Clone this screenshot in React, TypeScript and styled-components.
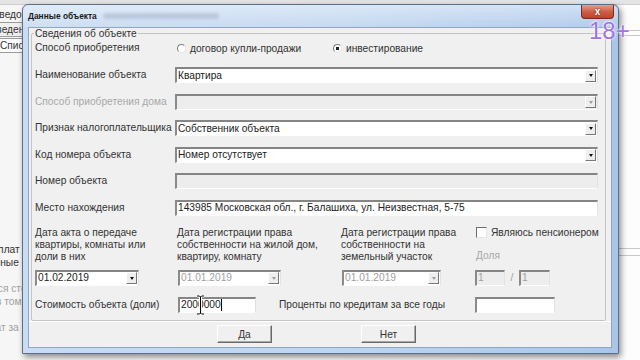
import styled, { createGlobalStyle } from 'styled-components';

const FS = '10.2px';

const GlobalStyle = createGlobalStyle`
    html, body {
        margin: 0;
        padding: 0;
        width: 640px;
        height: 360px;
        overflow: hidden;
        background: #f6f6f6;
        font-family: 'Liberation Sans', Arial, sans-serif;
    }
`;

export default function App() {
    return (
        <>
            <GlobalStyle />
            <Desktop>
                <TopBand />
                <BackPane>
                    <BackText style={{ marginTop: 8 }} $shift={-8}>Сведо</BackText>
                    <BackField $shift={-12}>Сведения</BackField>
                    <BackField $shift={-1} $white>Список</BackField>
                    <BackText style={{ marginTop: 190 }} $shift={-16}>Выплат имущ</BackText>
                    <BackText $shift={-18}>Данные о</BackText>
                    <BackText style={{ marginTop: 13 }} $shift={-9} $muted>Вся сто</BackText>
                    <BackText $shift={-4} $muted>в том</BackText>
                    <BackText style={{ marginTop: 13 }} $shift={-22} $muted>Уплат за</BackText>
                </BackPane>
                <RightPane>
                    <RightLine style={{ marginTop: 30 }} />
                    <RightLine style={{ marginTop: 4 }} />
                    <RightLine style={{ marginTop: 212 }} />
                    <RightLine style={{ marginTop: 6 }} />
                </RightPane>
            </Desktop>

            <Window>
                <TitleBar>
                    <Title>Данные объекта</Title>
                    <Blurred />
                    <CloseButton>x</CloseButton>
                </TitleBar>

                <Client>
                    <Group>
                        <Legend>Сведения об объекте</Legend>

                        <Row>
                            <Label>Способ приобретения</Label>
                            <RadioOption style={{ width: 154 }}>
                                <Radio />
                                договор купли-продажи
                            </RadioOption>
                            <RadioOption>
                                <Radio $checked />
                                инвестирование
                            </RadioOption>
                        </Row>

                        <Rows>
                            <Row>
                                <Label>Наименование объекта</Label>
                                <Combo value="Квартира" />
                            </Row>
                            <Row>
                                <Label $disabled>Способ приобретения дома</Label>
                                <Combo disabled />
                            </Row>
                            <Row>
                                <Label>Признак налогоплательщика</Label>
                                <Combo value="Собственник объекта" />
                            </Row>
                            <Row>
                                <Label>Код номера объекта</Label>
                                <Combo value="Номер отсутствует" />
                            </Row>
                            <Row>
                                <Label>Номер объекта</Label>
                                <TextBox $disabled $width={423} />
                            </Row>
                            <Row>
                                <Label>Место нахождения</Label>
                                <TextBox $width={423}>
                                    143985 Московская обл., г. Балашиха, ул. Неизвестная, 5-75
                                </TextBox>
                            </Row>
                        </Rows>

                        <DatesGrid>
                            <Caption>
                                Дата акта о передаче
                                <br />
                                квартиры, комнаты или
                                <br />
                                доли в них
                            </Caption>
                            <Caption>
                                Дата регистрации права
                                <br />
                                собственности на жилой дом,
                                <br />
                                квартиру, комнату
                            </Caption>
                            <Caption>
                                Дата регистрации права
                                <br />
                                собственности на
                                <br />
                                земельный участок
                            </Caption>
                            <PensionCol>
                                <CheckOption>
                                    <Check />
                                    Являюсь пенсионером
                                </CheckOption>
                                <Label $disabled>Доля</Label>
                            </PensionCol>

                            <DatePicker value="01.02.2019" width={104} />
                            <DatePicker value="01.01.2019" width={103} disabled shift={1} />
                            <DatePicker value="01.01.2019" width={99} disabled shift={1} />
                            <ShareRow>
                                <TextBox $disabled $width={30}>1</TextBox>
                                <Slash>/</Slash>
                                <TextBox $disabled $width={31}>1</TextBox>
                            </ShareRow>
                        </DatesGrid>

                        <CostRow>
                            <Label style={{ width: 143 }}>Стоимость объекта (доли)</Label>
                            <TextBox $width={78}>
                                2000000
                                <Caret />
                                <IBeam width="9" height="20" viewBox="0 0 9 20">
                                    <path
                                        d="M1 1h2.5l1 1 1-1H8M4.5 2v16M1 19h2.5l1-1 1 1H8"
                                        fill="none"
                                        stroke="#fff"
                                        strokeWidth="3"
                                    />
                                    <path
                                        d="M1 1h2.5l1 1 1-1H8M4.5 2v16M1 19h2.5l1-1 1 1H8"
                                        fill="none"
                                        stroke="#000"
                                        strokeWidth="1"
                                    />
                                </IBeam>
                            </TextBox>
                            <Label style={{ width: 196, marginLeft: 23 }}>
                                Проценты по кредитам за все годы
                            </Label>
                            <TextBox $width={80} />
                        </CostRow>
                    </Group>

                    <Buttons>
                        <Button>Да</Button>
                        <Button>Нет</Button>
                    </Buttons>
                </Client>
            </Window>

            <AgeMark>18+</AgeMark>
        </>
    );
}

function Combo({ value, disabled }: { value?: string; disabled?: boolean }) {
    return (
        <ComboBox $disabled={disabled}>
            <ComboText>{value}</ComboText>
            <DropButton $disabled={disabled} />
        </ComboBox>
    );
}

function DatePicker({
    value,
    width,
    disabled,
    shift = 0,
}: {
    value: string;
    width: number;
    disabled?: boolean;
    shift?: number;
}) {
    return (
        <ComboBox $width={width} style={{ marginLeft: shift }}>
            <ComboText $disabled={disabled}>{value}</ComboText>
            <DropButton $disabled={disabled} />
        </ComboBox>
    );
}

/* ---------- background application ---------- */

const Desktop = styled.div`
    position: relative;
    width: 640px;
    height: 360px;
    display: flex;
    justify-content: space-between;
`;

const TopBand = styled.div`
    position: absolute;
    left: 0;
    right: 0;
    top: 0;
    height: 4px;
    background: #e4e4e4;
    border-bottom: 1px solid #cfcfcf;
`;

const BackPane = styled.div`
    width: 22px;
    display: flex;
    flex-direction: column;
    overflow: hidden;
`;

const BackText = styled.div<{ $shift: number; $muted?: boolean }>`
    margin-left: ${(p) => p.$shift}px;
    font-size: ${FS};
    line-height: 13px;
    white-space: nowrap;
    color: ${(p) => (p.$muted ? '#a0a0a0' : '#333')};
`;

const BackField = styled.div<{ $shift: number; $white?: boolean }>`
    margin: 1px 0 0 ${(p) => p.$shift}px;
    width: 100px;
    height: 13px;
    flex-shrink: 0;
    border: 1px solid #9a9a9a;
    background: ${(p) => (p.$white ? '#fff' : '#f0f0f0')};
    font-size: ${FS};
    line-height: 13px;
    white-space: nowrap;
    color: #333;
`;

const RightPane = styled.div`
    width: 22px;
    display: flex;
    flex-direction: column;
    background: #fdfdfd;
`;

const RightLine = styled.div`
    height: 1px;
    background: #c8c8c8;
`;

/* ---------- dialog window ---------- */

const Window = styled.div`
    position: absolute;
    left: 22px;
    top: 4px;
    width: 597px;
    height: 350px;
    box-sizing: border-box;
    display: flex;
    flex-direction: column;
    border: 1px solid #5b6f88;
    border-radius: 6px 6px 0 0;
    background: linear-gradient(90deg, #c9dcf2 0%, #bed5ef 55%, #a9c6ea 100%);
    box-shadow: 2px 3px 6px rgba(0, 0, 0, 0.45);
`;

const TitleBar = styled.div`
    height: 22px;
    display: flex;
    align-items: center;
    padding-left: 5px;
    background: linear-gradient(180deg, rgba(255, 255, 255, 0.45) 0%, rgba(255, 255, 255, 0.1) 100%);
    border-radius: 6px 6px 0 0;
`;

const Title = styled.span`
    font-size: 8.4px;
    font-weight: bold;
    color: #1a1a1a;
`;

const Blurred = styled.span`
    width: 116px;
    height: 6px;
    margin-left: 6px;
    border-radius: 3px;
    background: #9aa8c0;
    opacity: 0.45;
    filter: blur(1.5px);
`;

const CloseButton = styled.div`
    margin-left: auto;
    margin-right: 4px;
    align-self: flex-start;
    width: 33px;
    height: 14px;
    box-sizing: border-box;
    display: flex;
    align-items: center;
    justify-content: center;
    border: 1px solid #7a2a20;
    border-top: none;
    border-radius: 0 0 4px 4px;
    background: linear-gradient(180deg, #e3a08e 0%, #cf5f48 50%, #c0432c 100%);
    color: #fff;
    font-size: 10px;
    font-weight: bold;
    line-height: 10px;
    text-shadow: 0 0 2px #5a1a10;
`;

const Client = styled.div`
    flex: 1;
    margin: 0 6px 5px 5px;
    display: flex;
    flex-direction: column;
    background: #f0f0f0;
    border: 1px solid #8fa7c4;
`;

const Group = styled.fieldset`
    margin: -1px 5px 0 2px;
    padding: 0 0 7px 3px;
    border: 1px solid #c4c4c4;
    border-radius: 2px;
    display: flex;
    flex-direction: column;
    min-inline-size: 0;
`;

const Legend = styled.legend`
    margin-left: -1px;
    padding: 0 1px;
    font-size: ${FS};
    line-height: 13px;
    color: #333;
`;

const Rows = styled.div`
    margin-top: 11px;
    display: flex;
    flex-direction: column;
    gap: 10.5px;
`;

const Row = styled.div`
    height: 16px;
    display: flex;
    align-items: center;
`;

const Label = styled.span<{ $disabled?: boolean }>`
    width: 140px;
    flex-shrink: 0;
    font-size: ${FS};
    line-height: 12px;
    white-space: nowrap;
    color: ${(p) => (p.$disabled ? '#a8a8a8' : '#333')};
`;

const RadioOption = styled.label`
    display: flex;
    align-items: center;
    gap: 4px;
    margin-left: 2px;
    font-size: ${FS};
    color: #333;
`;

const Radio = styled.span<{ $checked?: boolean }>`
    width: 7px;
    height: 7px;
    border-radius: 50%;
    border: 1px solid;
    border-color: #7a7a7a #e6e6e6 #e6e6e6 #7a7a7a;
    background: ${(p) => (p.$checked ? 'radial-gradient(circle, #222 0 1.6px, #fff 2px)' : '#fff')};
`;

const CheckOption = styled.label`
    display: flex;
    align-items: center;
    gap: 4px;
    font-size: ${FS};
    line-height: 12px;
    color: #333;
    white-space: nowrap;
`;

const Check = styled.span`
    width: 9px;
    height: 9px;
    border: 1px solid;
    border-color: #6e6e6e #e6e6e6 #e6e6e6 #6e6e6e;
    background: #fff;
`;

const ComboBox = styled.div<{ $disabled?: boolean; $width?: number }>`
    width: ${(p) => p.$width ?? 423}px;
    height: 16px;
    box-sizing: border-box;
    flex-shrink: 0;
    display: flex;
    align-items: center;
    border-style: solid;
    border-width: 2px 1px 1px 2px;
    border-color: #858585 #e2e2e2 #fdfdfd #8a8a8a;
    background: ${(p) => (p.$disabled ? '#ededed' : '#fff')};
`;

const ComboText = styled.span<{ $disabled?: boolean }>`
    flex: 1;
    padding-left: 1px;
    font-size: ${FS};
    line-height: 12px;
    white-space: nowrap;
    color: ${(p) => (p.$disabled ? '#a0a0a0' : '#222')};
`;

const DropButton = styled.span<{ $disabled?: boolean }>`
    width: 11px;
    height: 12px;
    margin-right: 1px;
    box-sizing: border-box;
    display: flex;
    align-items: center;
    justify-content: center;
    border: 1px solid;
    border-color: #fff #777 #777 #fff;
    background: #eeeeee;

    &::after {
        content: '';
        border-left: 2.5px solid transparent;
        border-right: 2.5px solid transparent;
        border-top: 3px solid ${(p) => (p.$disabled ? '#a0a0a0' : '#111')};
    }
`;

const TextBox = styled.div<{ $disabled?: boolean; $width: number }>`
    position: relative;
    width: ${(p) => p.$width}px;
    height: 16px;
    box-sizing: border-box;
    flex-shrink: 0;
    display: flex;
    align-items: center;
    padding-left: 1px;
    border-style: solid;
    border-width: 2px 1px 1px 2px;
    border-color: #858585 #e2e2e2 #fdfdfd #8a8a8a;
    background: ${(p) => (p.$disabled ? '#ededed' : '#fff')};
    font-size: ${FS};
    line-height: 12px;
    white-space: nowrap;
    color: ${(p) => (p.$disabled ? '#a0a0a0' : '#222')};
`;

const Caret = styled.span`
    width: 1px;
    height: 12px;
    background: #000;
`;

const IBeam = styled.svg`
    position: absolute;
    left: 16px;
    top: -4px;
`;

const DatesGrid = styled.div`
    margin-top: 11px;
    display: grid;
    grid-template-columns: 142px 164px 135px 1fr;
    grid-template-rows: 36px 16px;
    row-gap: 7px;
`;

const Caption = styled.div`
    font-size: ${FS};
    line-height: 12px;
    color: #333;
    white-space: nowrap;
`;

const PensionCol = styled.div`
    display: flex;
    flex-direction: column;
    gap: 11px;
`;

const ShareRow = styled.div`
    display: flex;
    align-items: center;
    margin-left: -1px;
`;

const Slash = styled.span`
    width: 14px;
    text-align: center;
    font-size: ${FS};
    color: #a0a0a0;
`;

const CostRow = styled.div`
    margin-top: 11px;
    height: 16px;
    display: flex;
    align-items: center;
`;

const Buttons = styled.div`
    flex: 1;
    display: flex;
    align-items: center;
    gap: 89px;
    padding-left: 188px;
    border-top: 1px solid #fff;
`;

const Button = styled.button`
    width: 55px;
    height: 18px;
    box-sizing: border-box;
    padding: 0;
    border: 1px solid;
    border-color: #fff #6a6a6a #6a6a6a #fff;
    box-shadow: inset -1px -1px 0 #a8a8a8;
    background: #f0f0f0;
    font-family: 'Liberation Sans', Arial, sans-serif;
    font-size: ${FS};
    color: #333;
`;

const AgeMark = styled.div`
    position: absolute;
    left: 589px;
    top: 17px;
    font-family: 'Liberation Sans', Arial, sans-serif;
    font-size: 24px;
    line-height: 28px;
    color: #a273e6;
    text-shadow: 0 0 2px #fff, 0 0 3px #fff;
`;
